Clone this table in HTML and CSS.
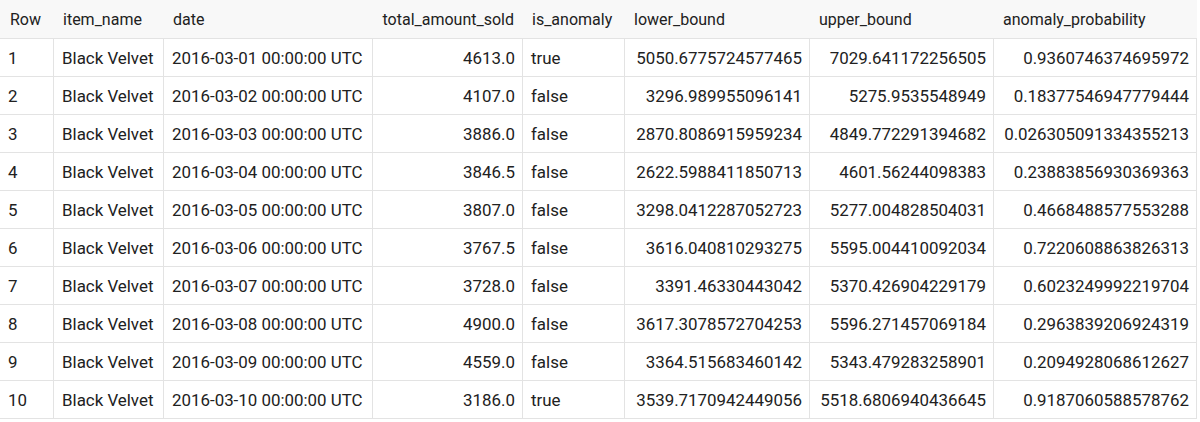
FILE: index.html
```html
<!DOCTYPE html>
<html>
<head>
<meta charset="utf-8">
<link rel="stylesheet" href="styles.css">
</head>
<body>
<table class="grid">
  <colgroup>
    <col class="c-row"><col class="c-name"><col class="c-date"><col class="c-total"><col class="c-anom"><col class="c-lower"><col class="c-upper"><col class="c-prob">
  </colgroup>
  <thead>
    <tr>
      <th>Row</th><th>item_name</th><th>date</th><th class="num">total_amount_sold</th><th>is_anomaly</th><th>lower_bound</th><th>upper_bound</th><th>anomaly_probability</th>
    </tr>
  </thead>
  <tbody>
    <tr><td>1</td><td>Black Velvet</td><td>2016-03-01 00:00:00 UTC</td><td class="num">4613.0</td><td>true</td><td class="num">5050.6775724577465</td><td class="num">7029.641172256505</td><td class="num">0.9360746374695972</td></tr>
    <tr><td>2</td><td>Black Velvet</td><td>2016-03-02 00:00:00 UTC</td><td class="num">4107.0</td><td>false</td><td class="num">3296.989955096141</td><td class="num">5275.9535548949</td><td class="num">0.18377546947779444</td></tr>
    <tr><td>3</td><td>Black Velvet</td><td>2016-03-03 00:00:00 UTC</td><td class="num">3886.0</td><td>false</td><td class="num">2870.8086915959234</td><td class="num">4849.772291394682</td><td class="num">0.026305091334355213</td></tr>
    <tr><td>4</td><td>Black Velvet</td><td>2016-03-04 00:00:00 UTC</td><td class="num">3846.5</td><td>false</td><td class="num">2622.5988411850713</td><td class="num">4601.56244098383</td><td class="num">0.23883856930369363</td></tr>
    <tr><td>5</td><td>Black Velvet</td><td>2016-03-05 00:00:00 UTC</td><td class="num">3807.0</td><td>false</td><td class="num">3298.0412287052723</td><td class="num">5277.004828504031</td><td class="num">0.4668488577553288</td></tr>
    <tr><td>6</td><td>Black Velvet</td><td>2016-03-06 00:00:00 UTC</td><td class="num">3767.5</td><td>false</td><td class="num">3616.040810293275</td><td class="num">5595.004410092034</td><td class="num">0.7220608863826313</td></tr>
    <tr><td>7</td><td>Black Velvet</td><td>2016-03-07 00:00:00 UTC</td><td class="num">3728.0</td><td>false</td><td class="num">3391.46330443042</td><td class="num">5370.426904229179</td><td class="num">0.6023249992219704</td></tr>
    <tr><td>8</td><td>Black Velvet</td><td>2016-03-08 00:00:00 UTC</td><td class="num">4900.0</td><td>false</td><td class="num">3617.3078572704253</td><td class="num">5596.271457069184</td><td class="num">0.2963839206924319</td></tr>
    <tr><td>9</td><td>Black Velvet</td><td>2016-03-09 00:00:00 UTC</td><td class="num">4559.0</td><td>false</td><td class="num">3364.515683460142</td><td class="num">5343.479283258901</td><td class="num">0.2094928068612627</td></tr>
    <tr><td>10</td><td>Black Velvet</td><td>2016-03-10 00:00:00 UTC</td><td class="num">3186.0</td><td>true</td><td class="num">3539.7170942449056</td><td class="num">5518.6806940436645</td><td class="num">0.9187060588578762</td></tr>
  </tbody>
</table>
</body>
</html>
```
FILE: styles.css
```css
html, body {
  margin: 0;
  padding: 0;
  background: #ffffff;
}
body {
  font-family: Roboto, "Liberation Sans", sans-serif;
  font-size: 17px;
  color: #212121;
}
.grid {
  width: 1197px;
  table-layout: fixed;
  border-collapse: separate;
  border-spacing: 0;
}
.c-row { width: 53px; }
.c-name { width: 110px; }
.c-date { width: 209px; }
.c-total { width: 150px; }
.c-anom { width: 102px; }
.c-lower { width: 185px; }
.c-upper { width: 184px; }
.c-prob { width: 204px; }

.grid th, .grid td {
  box-sizing: border-box;
  padding: 1px 8px 0 8px;
  white-space: nowrap;
  overflow: hidden;
  text-align: left;
  font-weight: 400;
  border-bottom: 1px solid #e3e3e3;
}
.grid th {
  height: 39px;
  background: #f8f8f8;
  font-size: 16px;
  padding-left: 10px;
}
.grid th.num {
  text-align: right;
  padding-right: 8px;
}
.grid td {
  height: 38px;
  font-size: 16.9px;
}
.grid td + td {
  border-left: 1px solid #e3e3e3;
}
.grid td:last-child {
  border-right: 1px solid #e3e3e3;
}
.grid td.num {
  text-align: right;
  padding-right: 7px;
}
```
